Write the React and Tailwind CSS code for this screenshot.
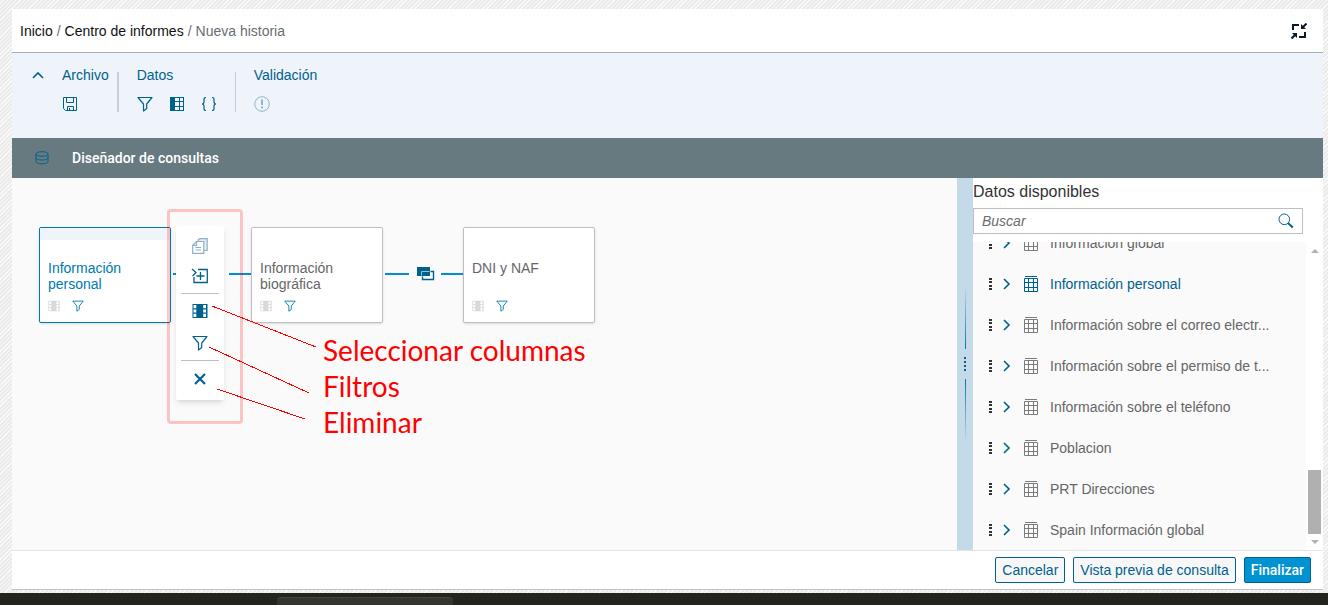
import React, { useState } from "react";

const FunnelIcon = ({ size = 16, className }) => (
  <svg width={size} height={size} viewBox="0 0 16 16" fill="none" stroke="currentColor" strokeWidth="1.2" className={className}>
    <path d="M1 1.5h14L9.7 8v4.6L6.5 15V8L1 1.5Z" strokeLinejoin="round" />
  </svg>
);

const ColumnsIcon = ({ size = 16, className }) => (
  <svg width={size} height={size} viewBox="0 0 16 16" className={className}>
    <rect x="0.5" y="1" width="15" height="14" fill="currentColor" />
    <path d="M1.5 2h2.8v3.2H1.5zM1.5 6.4h2.8v3.2H1.5zM1.5 10.8h2.8V14H1.5zM11.2 2H14v3.2h-2.8zM11.2 6.4H14v3.2h-2.8zM11.2 10.8H14V14h-2.8z" fill="#fff" />
  </svg>
);

const TableColumnIcon = () => (
  <svg width="16" height="16" viewBox="0 0 16 16">
    <rect x="1" y="1" width="14" height="14" fill="currentColor" />
    <path d="M6 2h4v3H6zM11 2h3v3h-3zM6 6h4v4H6zM11 6h3v4h-3zM6 11h4v3H6zM11 11h3v3h-3z" fill="#eff4fb" />
  </svg>
);

const SaveIcon = () => (
  <svg width="16" height="16" viewBox="0 0 16 16" fill="none" stroke="currentColor">
    <path d="M1.5 1.5h13v13h-11l-2-2v-11Z" />
    <path d="M4.5 1.5v5h7v-5M5.5 14.5v-4h6v4M7.5 12v2.5" />
  </svg>
);

const BracesIcon = () => (
  <svg width="16" height="16" viewBox="0 0 16 16" fill="none" stroke="currentColor" strokeWidth="1.2">
    <path d="M5 1.5C3.6 1.5 3 2 3 3.3v2.5C3 7.2 2.4 8 1 8c1.4 0 2 .8 2 2.2v2.5c0 1.3.6 1.8 2 1.8M11 1.5c1.4 0 2 .5 2 1.8v2.5C13 7.2 13.6 8 15 8c-1.4 0-2 .8-2 2.2v2.5c0 1.3-.6 1.8-2 1.8" />
  </svg>
);

const AlertIcon = () => (
  <svg width="16" height="16" viewBox="0 0 16 16" fill="none" stroke="currentColor">
    <circle cx="8" cy="8" r="7.3" />
    <path d="M8 3.5V9M8 10.5v2" strokeWidth="2" />
  </svg>
);

const DatabaseIcon = () => (
  <svg width="14" height="14" viewBox="0 0 14 14" fill="none" stroke="currentColor">
    <ellipse cx="7" cy="3" rx="6" ry="2.3" />
    <path d="M1 3v7.5c0 1.3 2.7 2.3 6 2.3s6-1 6-2.3V3M1 6.7C1 8 3.7 9 7 9s6-1 6-2.3" />
  </svg>
);

const CollapseIcon = () => (
  <svg width="16" height="16" viewBox="0 0 16 16" fill="none" stroke="currentColor" strokeWidth="2">
    <path d="M2 7V2h6M8 14h6V9" />
    <path d="M15.5.5 11 5M.5 15.5 5 11" />
    <path d="M10 1v5h5zM6 15v-5H1z" fill="currentColor" stroke="none" />
  </svg>
);

const CopyIcon = () => (
  <svg width="16" height="16" viewBox="0 0 16 16" fill="none" stroke="currentColor" strokeWidth="1.2">
    <path d="M6 3.5V2L7.500.6h7.700v11.900h-3" fill="#e3ecf3" />
    <path d="M4.500 3.500h7.300v11.900H.7V7.300l3.800-3.800Z" fill="#fff" />
    <path d="M4.500 3.500v3.800H.7M3.500 9.500h5.500M3.500 12H9" />
  </svg>
);

const AddNodeIcon = () => (
  <svg width="18" height="18" viewBox="0 0 18 18" fill="none" stroke="currentColor" strokeWidth="1.3">
    <path d="M7 2.500h9.300v13H3V10" />
    <path d="m1 2 4 3.500L1.500 9" />
    <path d="M9.500 5v8M5.500 9h8" />
  </svg>
);

const CloseIcon = () => (
  <svg width="14" height="14" viewBox="0 0 14 14" fill="none" stroke="currentColor" strokeWidth="2.200">
    <path d="m2 2 10 10M12 2 2 12" />
  </svg>
);

const JoinIcon = () => (
  <svg width="18" height="14" viewBox="0 0 18 14">
    <path d="M0 0h13v9H0z" fill="currentColor" />
    <path d="M5.500 9.500v3h11v-8h-3" fill="none" stroke="currentColor" strokeWidth="1.400" />
    <path d="M4.500 8.500v-4h8" fill="none" stroke="#8fc1da" />
  </svg>
);

const SearchIcon = () => (
  <svg width="16" height="16" viewBox="0 0 16 16" fill="none" stroke="currentColor">
    <circle cx="6.300" cy="6.300" r="5.300" />
    <path d="m10.200 10.200 4.600 4.300" strokeWidth="2" />
  </svg>
);

const ChevronIcon = ({ className }) => (
  <svg width="12" height="12" viewBox="0 0 12 12" fill="none" stroke="currentColor" strokeWidth="1.600" className={className}>
    <path d="m3 1 5 5-5 5" />
  </svg>
);

const GripIcon = () => (
  <svg width="3" height="12" viewBox="0 0 3 12" fill="currentColor">
    <path d="M0 0h3v2H0zM0 3h3v2H0zM0 7h3v2H0zM0 10h3v2H0z" />
  </svg>
);

const GridIcon = () => (
  <svg width="14" height="16" viewBox="0 0 14 16" fill="none" stroke="currentColor">
    <path d="M1 .5h12M.5 2.500h13v13H.5zM.5 6.500h13M.5 11.500h13M4.500 2.500v13M9.500 2.500v13" />
  </svg>
);

const tables = [
  { name: "Información global" },
  { name: "Información personal", active: true },
  { name: "Información sobre el correo electr..." },
  { name: "Información sobre el permiso de t..." },
  { name: "Información sobre el teléfono" },
  { name: "Poblacion" },
  { name: "PRT Direcciones" },
  { name: "Spain Información global" },
];

const IconButton = ({ label, children, className = "" }) => (
  <button type="button" aria-label={label} className={`flex items-center justify-center ${className}`}>
    {children}
  </button>
);

const QueryNode = ({ name, selected, className }) => (
  <div
    className={`absolute top-[49px] h-24 w-33 overflow-hidden rounded-xs border bg-white shadow ${
      selected ? "border-[#0079ad] text-[#0079ad]" : "border-[#bfbfbf] text-[#666]"
    } ${className}`}
  >
    <div className={`h-3 ${selected ? "bg-[#eff4fb]" : ""}`} />
    <div className="flex flex-col px-2 pt-5">
      <span className="h-8 w-24 text-sm leading-4">{name}</span>
      <div className="flex gap-3 pt-2">
        <ColumnsIcon size={12} className="text-[#d9d9d9]" />
        <FunnelIcon size={12} className="text-[#0079ad]" />
      </div>
    </div>
  </div>
);

const NodeMenu = () => (
  <div className="absolute top-12 left-41 flex w-12 flex-col items-center rounded-xs bg-white py-1 text-[#00618c] shadow-md">
    <IconButton label="Copiar" className="h-8 w-full text-[#8fb0c6]">
      <CopyIcon />
    </IconButton>
    <IconButton label="Añadir" className="h-7 w-full">
      <AddNodeIcon />
    </IconButton>
    <hr className="my-[3px] w-[38px] border-[#bfbfbf]" />
    <IconButton label="Seleccionar columnas" className="h-7 w-full">
      <ColumnsIcon />
    </IconButton>
    <IconButton label="Filtros" className="h-[35px] w-full">
      <FunnelIcon />
    </IconButton>
    <hr className="w-[38px] border-[#bfbfbf]" />
    <IconButton label="Eliminar" className="h-[35px] w-full">
      <CloseIcon />
    </IconButton>
  </div>
);

const Canvas = () => (
  <main className="relative min-w-0 flex-1 overflow-hidden bg-[#fafafa]">
    <svg width="600" height="360" className="absolute top-0 left-0" stroke="#008fd3" strokeWidth="2">
      <path d="M161 96h8M217 96h22M373 96h24M429 96h22" />
    </svg>
    <QueryNode name="Información personal" selected className="left-[27px]" />
    <QueryNode name="Información biográfica" className="left-[239px]" />
    <QueryNode name="DNI y NAF" className="left-[451px]" />
    <IconButton label="Unión" className="absolute top-[89px] left-[405px] text-[#00618c]">
      <JoinIcon />
    </IconButton>
    <NodeMenu />

    {/* Callouts for the node menu */}
    <div className="pointer-events-none absolute top-[31px] left-[155px] h-[215px] w-[76px] rounded-sm border-3 border-[#ff0000]/22" />
    <svg width="320" height="260" className="pointer-events-none absolute top-0 left-0" stroke="#f00" shapeRendering="crispEdges">
      <path d="m200 128 104 41M197 169l100 46M205 211l88 30" fill="none" />
    </svg>
    <ul className="absolute top-[154px] left-[311px] font-['Lato',sans-serif] text-[28px] leading-9 whitespace-nowrap text-[#f00]">
      <li>Seleccionar columnas</li>
      <li>Filtros</li>
      <li>Eliminar</li>
    </ul>
  </main>
);

const Splitter = () => (
  <div role="separator" className="flex w-4 shrink-0 flex-col items-center justify-center gap-2 bg-[#c5dae8] text-[#00618c]">
    <div className="h-16 w-px bg-linear-to-b from-transparent to-[#0079ad]" />
    <svg width="2" height="14" viewBox="0 0 2 14" fill="currentColor">
      <path d="M0 0h2v2H0zM0 4h2v2H0zM0 8h2v2H0zM0 12h2v2H0z" />
    </svg>
    <div className="h-16 w-px bg-linear-to-b from-[#0079ad] to-transparent" />
  </div>
);

const DataPanel = () => {
  const [query, setQuery] = useState("");

  return (
    <aside className="flex w-[350px] shrink-0 flex-col bg-white">
      <label htmlFor="search" className="pt-1 pb-1.5 text-base leading-5 text-[#333]">
        Datos disponibles
      </label>
      <div className="mr-5 flex h-[26px] items-center border border-[#bfbfbf] px-2">
        <input
          id="search"
          type="text"
          placeholder="Buscar"
          value={query}
          onChange={(e) => setQuery(e.target.value)}
          className="min-w-0 flex-1 text-sm outline-none placeholder:text-[#6a6d70] placeholder:italic"
        />
        <IconButton label="Buscar" className="text-[#00618c]">
          <SearchIcon />
        </IconButton>
      </div>
      <div className="mt-2 flex min-h-0 flex-1">
        <ul className="flex min-w-0 flex-1 flex-col justify-end overflow-hidden bg-[#fafafa]">
          {tables.map(({ name, active }) => (
            <li key={name} className="flex h-[41px] shrink-0 items-center pl-4 text-sm">
              <span className="text-[#333]">
                <GripIcon />
              </span>
              <IconButton label="Expandir" className="mr-[11px] ml-[9px] text-[#00618c]">
                <ChevronIcon />
              </IconButton>
              <span className={active ? "text-[#00618c]" : "text-[#7b7b7b]"}>
                <GridIcon />
              </span>
              <span className={`ml-3 truncate ${active ? "text-[#00618c]" : "text-[#666]"}`}>{name}</span>
            </li>
          ))}
        </ul>
        <div className="flex w-[17px] flex-col items-center pt-[7px] pb-1.5 text-[#b0b0b0]">
          <svg width="8" height="4" viewBox="0 0 8 4" fill="currentColor">
            <path d="M4 0 8 4H0z" />
          </svg>
          <div className="mt-auto mb-1.5 h-16 w-[13px] bg-[#b0b0b0]" />
          <svg width="8" height="4" viewBox="0 0 8 4" fill="currentColor">
            <path d="M0 0h8L4 4z" />
          </svg>
        </div>
      </div>
    </aside>
  );
};

const Toolbar = () => (
  <div className="flex h-[85px] shrink-0 bg-[#eff4fb] pl-5 text-sm leading-5 text-[#00618c]">
    <IconButton label="Contraer" className="mt-4 mr-[18px] h-3 w-3">
      <ChevronIcon className="-rotate-90" />
    </IconButton>
    <section className="flex flex-col gap-[11px] pt-3 pr-2">
      <h2>Archivo</h2>
      <div className="flex gap-4">
        <IconButton label="Guardar">
          <SaveIcon />
        </IconButton>
      </div>
    </section>
    <div className="mt-[19px] h-10 w-0.5 bg-[#c7d0d9]" />
    <section className="flex flex-col gap-[11px] px-[18px] pt-3">
      <h2>Datos</h2>
      <div className="flex gap-4">
        <IconButton label="Filtros">
          <FunnelIcon />
        </IconButton>
        <IconButton label="Columnas">
          <TableColumnIcon />
        </IconButton>
        <IconButton label="Código">
          <BracesIcon />
        </IconButton>
      </div>
    </section>
    <div className="mt-[19px] h-10 w-px bg-[#c7d0d9]" />
    <section className="flex flex-col gap-[11px] px-[18px] pt-3">
      <h2>Validación</h2>
      <div className="flex text-[#8fb5cd]">
        <IconButton label="Validar">
          <AlertIcon />
        </IconButton>
      </div>
    </section>
  </div>
);

const App = () => {
  return (
    <div className="flex h-screen flex-col bg-[repeating-linear-gradient(135deg,#ebebeb_0_2px,#fafafa_2px_3px)] font-['Liberation_Sans',sans-serif]">
      <div className="mt-[9px] mr-[5px] mb-[3px] ml-3 flex min-h-0 flex-1 flex-col border-b border-[#c4c4c4] bg-white">
        <header className="flex h-11 shrink-0 items-center justify-between border-b border-[#9fb0c0] pr-4 pl-2">
          <nav className="flex gap-1 text-sm text-[#6a6d70]">
            <a href="#inicio" className="text-[#111]">Inicio</a>
            <span>/</span>
            <a href="#informes" className="text-[#111]">Centro de informes</a>
            <span>/</span>
            <span>Nueva historia</span>
          </nav>
          <IconButton label="Salir de pantalla completa" className="text-[#0b1a2a]">
            <CollapseIcon />
          </IconButton>
        </header>

        <Toolbar />

        <div className="flex h-10 shrink-0 items-center gap-[23px] bg-[#677a80] pl-[23px]">
          <span className="text-[#00618c]">
            <DatabaseIcon />
          </span>
          <h1 className="font-['Roboto',sans-serif] text-sm font-medium text-white">Diseñador de consultas</h1>
        </div>

        <div className="flex min-h-0 flex-1">
          <Canvas />
          <Splitter />
          <DataPanel />
        </div>

        <footer className="flex shrink-0 justify-end gap-2 border-t border-[#e5e5e5] px-3 py-1.5 text-sm text-[#00618c]">
          <button type="button" className="h-[26px] rounded-xs border border-[#00618c] bg-[#f7f7f7] px-1.5">
            Cancelar
          </button>
          <button type="button" className="h-[26px] rounded-xs border border-[#00618c] bg-[#f7f7f7] px-1.5">
            Vista previa de consulta
          </button>
          <button type="button" className="h-[26px] rounded-xs border border-[#00618c] bg-[#0092d1] px-1.5 font-['Roboto',sans-serif] font-medium text-white">
            Finalizar
          </button>
        </footer>
      </div>

      {/* Desktop taskbar */}
      <div className="flex h-3 shrink-0 items-end bg-[#24241e]">
        <div className="ml-[277px] h-2 w-44 rounded-t-sm border-t border-[#44443e] bg-[#353530]" />
      </div>
    </div>
  );
};

export default App;
